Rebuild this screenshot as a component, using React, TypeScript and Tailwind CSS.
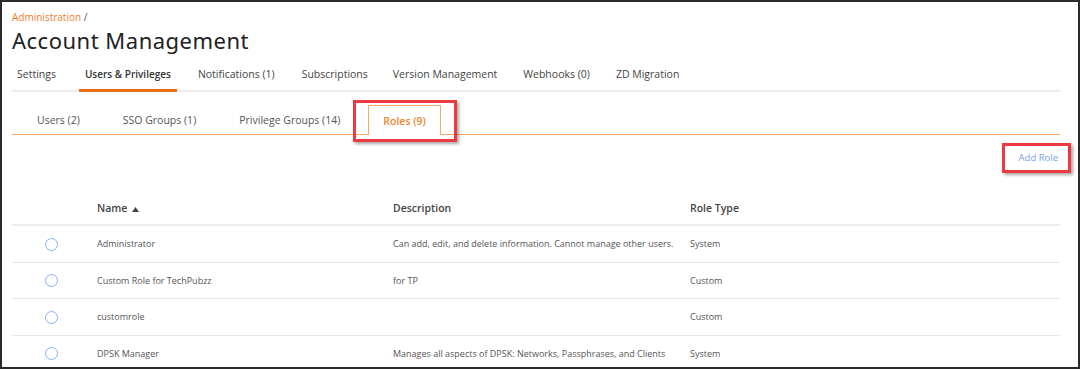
import React from 'react';

const font = { fontFamily: '"Open Sans", "Noto Sans", sans-serif' };

// label + left margin (written out so Tailwind picks them up)
const topTabs = [
  { label: 'Settings', ml: '-ml-px' },
  { label: 'Users & Privileges', ml: 'ml-[17px]' },
  { label: 'Notifications (1)', ml: 'ml-[15px]' },
  { label: 'Subscriptions', ml: 'ml-[15px]' },
  { label: 'Version Management', ml: 'ml-[13px]' },
  { label: 'Webhooks (0)', ml: 'ml-[14px]' },
  { label: 'ZD Migration', ml: 'ml-[14px]' },
];

const subTabs = ['Users (2)', 'SSO Groups (1)', 'Privilege Groups (14)', 'Roles (9)'];

const roles = [
  { name: 'Administrator', description: 'Can add, edit, and delete information. Cannot manage other users.', type: 'System' },
  { name: 'Custom Role for TechPubzz', description: 'for TP', type: 'Custom' },
  { name: 'customrole', description: '', type: 'Custom' },
  { name: 'DPSK Manager', description: 'Manages all aspects of DPSK: Networks, Passphrases, and Clients', type: 'System' },
];

export default function App() {
  return (
    <div
      className="relative w-[1080px] h-[369px] overflow-hidden bg-white border-2 border-[#2b2b2b] text-[#555]"
      style={font}
    >
      <div className="pl-[10px] pr-[18px]">
        {/* Breadcrumb + title */}
        <div className="pt-[8px] text-[10px] leading-[14px] text-[#f07d2a]">
          Administration <span className="text-[#555]">/</span>
        </div>
        <h1
          className="mt-[2px] text-[22px] leading-[28px] text-[#222] tracking-[0.5px]"
          style={{ fontFamily: '"Noto Sans", sans-serif' }}
        >
          Account Management
        </h1>

        {/* Top tabs */}
        <div className="mt-[12px] flex border-b-2 border-[#ececec]">
          {topTabs.map((t, i) => (
            <div
              key={t.label}
              className={`px-[6px] ${t.ml} pb-[7px] leading-[16px] -mb-[2px] border-b-[3px] ${
                i === 1
                  ? 'text-[10px] font-semibold text-[#333] border-[#ec6a12]'
                  : 'text-[10.5px] text-[#444] border-transparent'
              }`}
            >
              {t.label}
            </div>
          ))}
        </div>

        {/* Sub tabs */}
        <div className="mt-[13px] flex items-end border-b border-[#f5a867] pl-[10px]">
          {subTabs.map((t, i) => (
            <div
              key={t}
              className={`flex items-center px-[14px] pt-[2px] text-[10.5px] ${i > 0 ? 'ml-[13px]' : ''} ${
                i === 3
                  ? 'h-[30px] font-semibold text-[#f0862a] border border-b-0 border-[#f5a867] bg-white -mb-px'
                  : 'h-[29px] text-[#555] border border-transparent'
              }`}
            >
              {t}
            </div>
          ))}
        </div>

        {/* Add Role */}
        <div className="flex justify-end pt-[16px] pr-[2px]">
          <span className="text-[9.5px] text-[#7b9ee6]">Add Role</span>
        </div>

        {/* Table */}
        <div className="mt-[35px]">
          <div className="flex items-center h-[18px] text-[10.5px] font-semibold text-[#444] border-b-2 border-[#ececec] pb-[6px] box-content">
            <div className="w-[85px]" />
            <div className="w-[296px] flex items-center gap-[5px]">
              Name
              <svg width="7" height="5" viewBox="0 0 7 5">
                <path d="M0 5 L3.5 0 L7 5 Z" fill="#444" />
              </svg>
            </div>
            <div className="w-[297px]">Description</div>
            <div>Role Type</div>
          </div>
          {roles.map((r) => (
            <div key={r.name} className="flex items-center h-[36.5px] text-[9px] text-[#555] border-b border-[#e6e6e6]">
              <div className="w-[85px] flex justify-start pl-[33px]">
                <span className="block w-[13px] h-[13px] rounded-full border-[1.5px] border-[#86b1f2]" />
              </div>
              <div className="w-[296px]">{r.name}</div>
              <div className="w-[297px]">{r.description}</div>
              <div>{r.type}</div>
            </div>
          ))}
        </div>
      </div>

      {/* Callout highlights */}
      <div className="absolute left-[351px] top-[98px] w-[104px] h-[42px] border-[3px] border-[#ec3b40] shadow-[2px_2px_3px_rgba(0,0,0,0.35)]" />
      <div className="absolute left-[1000px] top-[141px] w-[69px] h-[30px] border-[3px] border-[#ec3b40] shadow-[2px_2px_3px_rgba(0,0,0,0.35)]" />
    </div>
  );
}
